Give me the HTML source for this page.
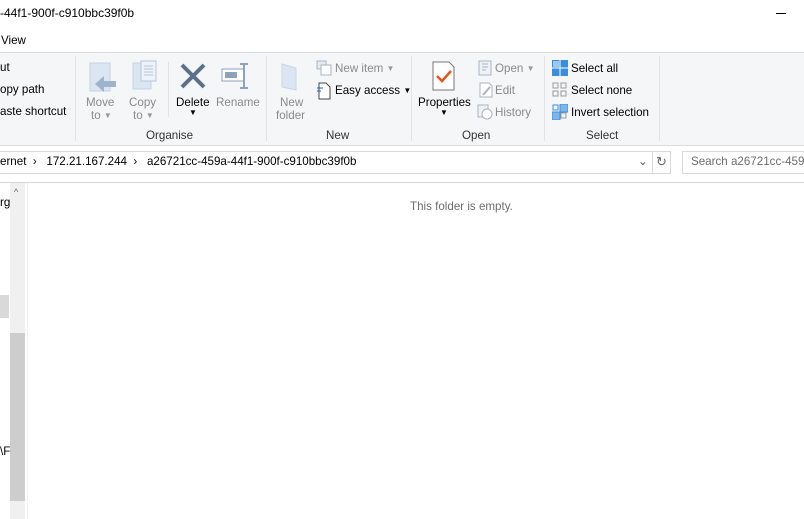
<!DOCTYPE html>
<html><head><style>
body{margin:0;width:804px;height:519px;overflow:hidden;background:#fff;font-family:"Liberation Sans",sans-serif;font-size:11.6px;color:#000;position:relative}
.a{position:absolute;white-space:nowrap}
.g{color:#8a8a8a}
.s{font-size:8px;color:#999;vertical-align:1px}
</style></head><body>
<div class="a" style="left:0;top:6px;font-size:12px">-44f1-900f-c910bbc39f0b</div>
<div class="a" style="left:776px;top:13px;width:10px;height:1px;background:#000"></div>
<div class="a" style="left:1px;top:34px">View</div>
<div class="a" style="left:0;top:52px;width:804px;height:92px;background:#f5f6f7;border-top:1px solid #dadbdc;border-bottom:1px solid #dadbdc"></div>
<div class="a" style="left:75px;top:56px;width:1px;height:85px;background:#e2e3e4"></div>
<div class="a" style="left:266px;top:56px;width:1px;height:85px;background:#e2e3e4"></div>
<div class="a" style="left:411px;top:56px;width:1px;height:85px;background:#e2e3e4"></div>
<div class="a" style="left:544px;top:56px;width:1px;height:85px;background:#e2e3e4"></div>
<div class="a" style="left:659px;top:56px;width:1px;height:85px;background:#e2e3e4"></div>
<div class="a" style="left:168px;top:62px;width:1px;height:55px;background:#e2e3e4"></div>
<div class="a" style="left:0;top:61px">ut</div>
<div class="a" style="left:0;top:83px">opy path</div>
<div class="a" style="left:0;top:105px">aste shortcut</div>
<svg class="a" style="left:88px;top:61px" width="30" height="32"><rect x="2" y="2" width="20" height="28" fill="#dbe6f2" stroke="#c2d2e4"/><path d="M28 20h-12v-5l-9 8 9 8v-5h12z" fill="#9fb4cc"/></svg>
<svg class="a" style="left:131px;top:59px" width="30" height="32"><rect x="2" y="4" width="18" height="26" fill="#dbe6f2" stroke="#c2d2e4"/><rect x="10" y="2" width="15" height="20" fill="#eef3f9" stroke="#b5c5d8"/><path d="M13 7h9M13 10h9M13 13h9M13 16h9" stroke="#b5c5d8"/></svg>
<div class="a g" style="left:86px;top:96px">Move</div><div class="a g" style="left:91px;top:109px">to <span class="s">▼</span></div>
<div class="a g" style="left:129px;top:96px">Copy</div><div class="a g" style="left:133px;top:109px">to <span class="s">▼</span></div>
<svg class="a" style="left:179px;top:62px" width="28" height="28"><path d="M3 3L25 25M25 3L3 25" stroke="#5c6f8a" stroke-width="4"/></svg>
<svg class="a" style="left:221px;top:62px" width="32" height="28"><rect x="1" y="7" width="22" height="12" fill="#fff" stroke="#8da3bd"/><rect x="4" y="10" width="12" height="6" fill="#8da3bd"/><path d="M23 2v24M19 2h8M19 26h8" stroke="#8da3bd" stroke-width="2"/></svg>
<div class="a" style="left:176px;top:96px">Delete</div><div class="a" style="left:189px;top:108px;font-size:8px">▼</div>
<div class="a g" style="left:216px;top:96px">Rename</div>
<div class="a" style="left:146px;top:129px;color:#333">Organise</div>
<svg class="a" style="left:281px;top:62px" width="20" height="30"><path d="M1 2l14 4v22l-14-3z" fill="#dbe6f2" stroke="#c9d6e6"/></svg>
<div class="a g" style="left:280px;top:96px">New</div><div class="a g" style="left:276px;top:109px">folder</div>
<svg class="a" style="left:316px;top:60px" width="16" height="16"><rect x="1" y="1" width="9" height="8" fill="#e5ebf2" stroke="#a8b4c2"/><rect x="5" y="5" width="10" height="10" fill="#fff" stroke="#a8b4c2"/></svg>
<div class="a g" style="left:335px;top:62px">New item <span class="s">▼</span></div>
<svg class="a" style="left:316px;top:82px" width="16" height="18"><path d="M3 1h7l4 4v12h-11z" fill="#fff" stroke="#444"/><path d="M1 6h6M1 9h4" stroke="#2a5fa8"/></svg>
<div class="a" style="left:335px;top:84px">Easy access <span class="s" style="color:#000">▼</span></div>
<div class="a" style="left:326px;top:129px;color:#333">New</div>
<svg class="a" style="left:432px;top:61px" width="24" height="30"><path d="M1 1h16l5 5v23h-21z" fill="#fff" stroke="#777"/><path d="M5 15l5 5 9-10" stroke="#e8561c" stroke-width="2.5" fill="none"/></svg>
<div class="a" style="left:418px;top:96px">Properties</div><div class="a" style="left:440px;top:108px;font-size:8px">▼</div>
<svg class="a" style="left:478px;top:60px" width="16" height="16"><rect x="1" y="1" width="12" height="14" fill="#eef2f6" stroke="#a8b4c2"/><path d="M4 4h6M4 7h6M4 10h4" stroke="#a8b4c2"/></svg>
<div class="a g" style="left:495px;top:62px">Open <span class="s">▼</span></div>
<svg class="a" style="left:478px;top:82px" width="16" height="16"><path d="M2 1h9l3 3v11h-12z" fill="#fff" stroke="#a8b4c2"/><path d="M5 13l7-8" stroke="#a8b4c2" stroke-width="2"/></svg>
<div class="a g" style="left:495px;top:84px">Edit</div>
<svg class="a" style="left:476px;top:104px" width="18" height="16"><rect x="2" y="1" width="10" height="12" fill="#eef2f6" stroke="#a8b4c2"/><circle cx="11" cy="10" r="5" fill="#fff" stroke="#a8b4c2"/></svg>
<div class="a g" style="left:495px;top:106px">History</div>
<div class="a" style="left:462px;top:129px;color:#333">Open</div>
<svg class="a" style="left:552px;top:60px" width="16" height="16"><rect x="0" y="0" width="16" height="16" fill="#3b8de0"/><path d="M8 0v16M0 8h16" stroke="#fff"/><rect x="1" y="1" width="6" height="6" fill="#9cc7f0"/></svg>
<div class="a" style="left:571px;top:62px">Select all</div>
<svg class="a" style="left:552px;top:82px" width="16" height="16"><rect x="1" y="1" width="5" height="5" fill="none" stroke="#999"/><rect x="9" y="1" width="5" height="5" fill="none" stroke="#999"/><rect x="1" y="9" width="5" height="5" fill="none" stroke="#999"/><rect x="9" y="9" width="5" height="5" fill="none" stroke="#999"/></svg>
<div class="a" style="left:571px;top:84px">Select none</div>
<svg class="a" style="left:552px;top:104px" width="16" height="16"><rect x="1" y="1" width="5" height="5" fill="none" stroke="#3b8de0"/><rect x="8" y="0" width="8" height="8" fill="#7eb6ec" stroke="#3b8de0"/><rect x="0" y="8" width="8" height="8" fill="#7eb6ec" stroke="#3b8de0"/><rect x="9" y="9" width="5" height="5" fill="none" stroke="#999"/></svg>
<div class="a" style="left:571px;top:106px">Invert selection</div>
<div class="a" style="left:586px;top:129px;color:#333">Select</div>
<div class="a" style="left:-1px;top:151px;width:670px;height:21px;border:1px solid #d9d9d9"></div>
<div class="a" style="left:652px;top:151px;width:1px;height:22px;background:#d9d9d9"></div>
<div class="a" style="left:0;top:155px">ernet &nbsp;›&nbsp;&nbsp; 172.21.167.244 &nbsp;›&nbsp;&nbsp; a26721cc-459a-44f1-900f-c910bbc39f0b</div>
<div class="a" style="left:638px;top:154px;color:#555">⌄</div>
<div class="a" style="left:656px;top:154px;color:#666;font-size:13px">↻</div>
<div class="a" style="left:682px;top:151px;width:130px;height:21px;border:1px solid #d9d9d9"></div>
<div class="a" style="left:691px;top:155px;color:#6d6d6d">Search a26721cc-459a</div>
<div class="a" style="left:0;top:182px;width:804px;height:1px;background:#d5d5d5"></div>
<div class="a" style="left:0;top:196px">rg</div>
<div class="a" style="left:0;top:295px;width:9px;height:23px;background:#d9d9d9"></div>
<div class="a" style="left:0;top:445px">\F</div>
<div class="a" style="left:10px;top:183px;width:15px;height:336px;background:#f0f0f0"></div>
<div class="a" style="left:14px;top:187px;font-size:9px;color:#606060">^</div>
<div class="a" style="left:10px;top:333px;width:15px;height:168px;background:#cdcdcd"></div>
<div class="a" style="left:27px;top:183px;width:1px;height:336px;background:#f0f0f0"></div>
<div class="a" style="left:410px;top:200px;color:#6d6d6d">This folder is empty.</div>
</body></html>
